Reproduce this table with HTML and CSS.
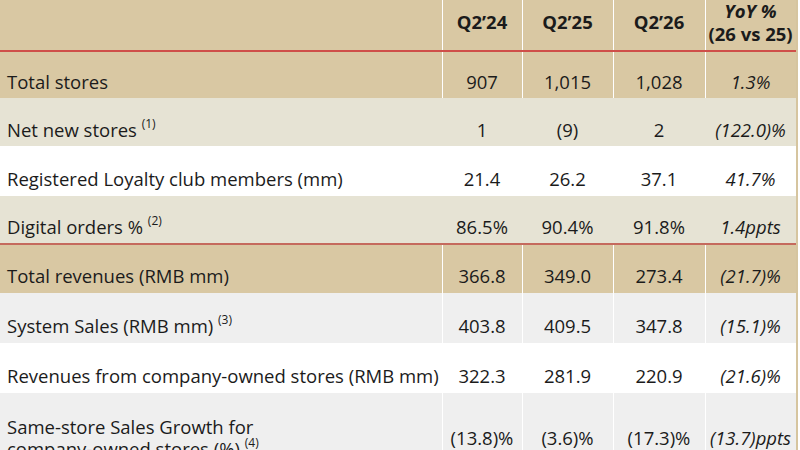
FILE: index.html
```html
<!DOCTYPE html>
<html lang="en">
<head>
<meta charset="utf-8">
<title>Operating metrics</title>
<link rel="stylesheet" href="styles.css">
</head>
<body>
<div class="frame">
<table class="kpi">
  <colgroup>
    <col class="c-label">
    <col class="c-q24">
    <col class="c-q25">
    <col class="c-q26">
    <col class="c-yoy">
  </colgroup>
  <thead>
    <tr class="head">
      <th class="label"></th>
      <th>Q2’24</th>
      <th>Q2’25</th>
      <th>Q2’26</th>
      <th class="yoy"><em>YoY %</em><br>(26 vs 25)</th>
    </tr>
  </thead>
  <tbody>
    <tr class="tan h46">
      <td class="label">Total stores</td>
      <td>907</td><td>1,015</td><td>1,028</td><td class="yoy">1.3%</td>
    </tr>
    <tr class="beige h48">
      <td class="label">Net new stores <sup>(1)</sup></td>
      <td>1</td><td>(9)</td><td>2</td><td class="yoy">(122.0)%</td>
    </tr>
    <tr class="white h50">
      <td class="label">Registered Loyalty club members (mm)</td>
      <td>21.4</td><td>26.2</td><td>37.1</td><td class="yoy">41.7%</td>
    </tr>
    <tr class="beige h47 rule">
      <td class="label">Digital orders % <sup>(2)</sup></td>
      <td>86.5%</td><td>90.4%</td><td>91.8%</td><td class="yoy">1.4ppts</td>
    </tr>
    <tr class="tan h48b">
      <td class="label">Total revenues (RMB mm)</td>
      <td>366.8</td><td>349.0</td><td>273.4</td><td class="yoy">(21.7)%</td>
    </tr>
    <tr class="grey h50">
      <td class="label">System Sales (RMB mm) <sup>(3)</sup></td>
      <td>403.8</td><td>409.5</td><td>347.8</td><td class="yoy">(15.1)%</td>
    </tr>
    <tr class="white h50">
      <td class="label">Revenues from company-owned stores (RMB mm)</td>
      <td>322.3</td><td>281.9</td><td>220.9</td><td class="yoy">(21.6)%</td>
    </tr>
    <tr class="grey double">
      <td class="label">Same-store Sales Growth for<br>company-owned stores (%) <sup>(4)</sup></td>
      <td>(13.8)%</td><td>(3.6)%</td><td>(17.3)%</td><td class="yoy">(13.7)ppts</td>
    </tr>
  </tbody>
</table>
</div>
</body>
</html>
```

FILE: styles.css
```css
html, body {
  margin: 0;
  padding: 0;
  background: #ffffff;
}

body {
  font-family: "Open Sans", "Noto Sans", "DejaVu Sans", sans-serif;
  color: #1b1b1b;
  overflow: hidden;
}

.frame {
  width: 796px;
  border-right: 2px solid #d6c59f;
}

.kpi {
  width: 796px;
  table-layout: fixed;
  border-collapse: separate;
  border-spacing: 0;
  font-size: 18.5px;
  line-height: 22px;
}

.c-label { width: 442px; }
.c-q24 { width: 80px; }
.c-q25 { width: 91px; }
.c-q26 { width: 92px; }
.c-yoy { width: 91px; }

.kpi th,
.kpi td {
  padding: 0;
  text-align: center;
  vertical-align: bottom;
  white-space: nowrap;
}

.kpi .label {
  text-align: left;
  padding-left: 7px;
}

.kpi .yoy {
  font-style: italic;
}

/* header: 45 + 5 = 50, then the red rule */
.head th {
  height: 45px;
  padding-bottom: 5px;
  vertical-align: middle;
  background: #d9c8a3;
  font-weight: 700;
  font-size: 18.5px;
  line-height: 22.5px;
  border-bottom: 2px solid #cf4f49;
  box-shadow: inset 1px 0 0 #ffffff;
}

.head th.label {
  box-shadow: none;
}

.head th.yoy {
  font-style: normal;
}

.head th.yoy em {
  font-style: italic;
}

/* body row heights (height + padding-bottom = row height) */
.kpi tr.h46 td { height: 41px; padding-bottom: 5px; }
.kpi tr.h48 td { height: 43px; padding-bottom: 5px; }
.kpi tr.h50 td { height: 44px; padding-bottom: 6px; }
.kpi tr.h47 td { height: 42px; padding-bottom: 5px; }
.kpi tr.h48b td { height: 42px; padding-bottom: 6px; }

.kpi tr.rule td {
  border-bottom: 2px solid #c56a5d;
}

.kpi tr.double td {
  height: 44px;
  padding-top: 23px;
  padding-bottom: 23px;
  vertical-align: middle;
}

/* row fills */
.tan td { background: #d9c8a3; }
.beige td { background: #e6e3d4; }
.white td { background: #ffffff; }
.grey td { background: #efefef; }

.tan td:not(.label),
.grey td:not(.label) {
  box-shadow: inset 1px 0 0 #ffffff;
}

sup {
  font-size: 12px;
  line-height: 0;
  vertical-align: 9px;
}
```
